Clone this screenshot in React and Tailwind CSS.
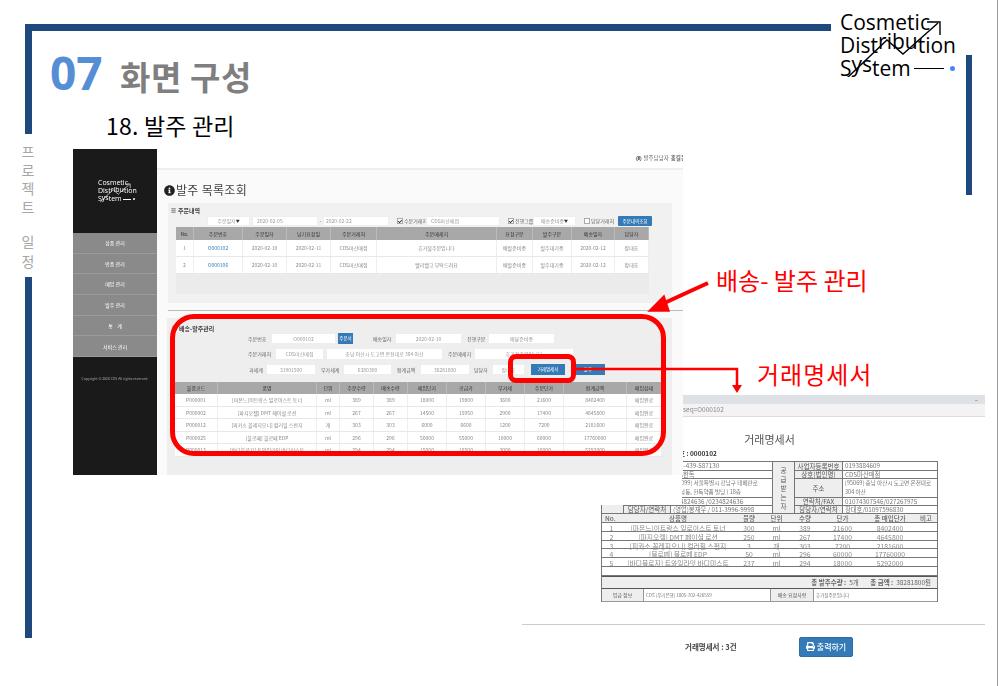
import React from "react";
import { FaInfoCircle, FaBars, FaPrint, FaRegUserCircle, FaCheck } from "react-icons/fa";

function Logo({ dark, box, text, raise, stroke, line, dot }) {
  return (
    <div className={`relative ${box} ${text} font-medium font-['Open_Sans','Noto_Sans',sans-serif] ${dark ? "text-white" : "text-black"}`}>
      <div>Cosmetic</div>
      <div>Dist<span className={`relative ${raise}`}>ribu</span>tion</div>
      <div className="flex items-center">
        S<span className={`relative ${raise}`}>ys</span>tem
        <span className={`ml-[3%] ${line} ${dark ? "bg-white" : "bg-black"}`} />
        <span className={`ml-[5%] rounded-full ${dot} ${dark ? "bg-white" : "bg-[#4a86f7]"}`} />
      </div>
      <svg className="absolute left-0 top-0 w-full h-full" viewBox="0 0 115 66" fill="none" stroke={dark ? "#fff" : "#000"} strokeWidth={stroke}>
        <path d="M7 67 L47 29 L63 43 L98 12" />
        <path d="M87 11 L100 11 L100 24" />
      </svg>
    </div>
  );
}

const Box = ({ c = "", children }) => (
  <div className={`h-full flex items-center justify-center bg-white rounded-[1px] text-[5px] text-[#999] border border-[#eeeeee] ${c}`}>{children}</div>
);
const Lbl = ({ c = "", children }) => (
  <div className={`text-[5px] text-[#666] whitespace-nowrap ${c}`}>{children}</div>
);
const Check = ({ on = true, c = "" }) => (
  <div className={`w-[6px] h-[6px] flex items-center justify-center bg-white border border-[#aaaaaa] text-[#222] text-[5px] ${c}`}>{on && <FaCheck />}</div>
);

const orderHead = ["No.", "주문번호", "주문일자", "납기요청일", "주문거래처", "주문메세지", "요청구분", "발주구분", "배송일자", "담당자"];
const orderRows = [
  ["1", "O000102", "2020-02-10", "2020-02-11", "CDS마산매점", "휴가철주문입니다", "배발준비중", "발주대기중", "2020-02-12", "장대호"],
  ["2", "O000106", "2020-02-10", "2020-02-11", "CDS마산매점", "빨리빨고 부탁드려요", "배발준비중", "발주대기중", "2020-02-12", "장대호"],
];
const shipHead = ["물품코드", "품명", "단위", "주문수량", "배송수량", "매입단가", "공급가", "부가세", "주문단가", "합계금액", "매입상태"];
const shipRows = [
  ["P000001", "[마몬느]이트랑스 일로이스트 토너", "ml", "389", "389", "18000", "19800", "3600", "21600", "8402400", "매입완료"],
  ["P000002", "[파지오젤] DMT 페이셜 로션", "ml", "267", "267", "14500", "15950", "2900", "17400", "4645800", "매입완료"],
  ["P000012", "[피카소 꼴레지오니] 컬러힐 스펀지", "개", "303", "303", "6000", "6600", "1200", "7200", "2181600", "매입완료"],
  ["P000025", "[블로떼] 블로떼 EDP", "ml", "296", "296", "50000", "55000", "10000", "60000", "17760000", "매입완료"],
  ["P000013", "[바디블로지] 트와일라잇 바디미스트", "ml", "294", "294", "15000", "16500", "3000", "18000", "5292000", "매입완료"],
];
const menu = ["상품 관리", "반품 관리", "매입 관리", "발주 관리", "통    계", "서비스 관리"];

function AdminShot() {
  return (
    <div className="absolute left-[73px] top-[149px] w-[610px] h-[326px] flex bg-[#fafafa] blur-[0.45px] overflow-hidden">
      <aside className="w-[84px] bg-[#1a1a1a] flex flex-col shrink-0">
        <div className="h-[84px] pt-[30px] pl-[25px]">
          <Logo dark box="w-[37px] h-[24px]" text="text-[7px] leading-[8px]" raise="-top-[1px]" stroke="2" line="w-[9px] h-px" dot="w-[2px] h-[2px]" />
        </div>
        <nav className="flex flex-col bg-[#8a8a8a]">
          {menu.map((m) => (
            <div key={m} className="h-[20.7px] flex items-center justify-center text-[5px] text-white whitespace-pre border-b border-[#9a9a9a]">{m}</div>
          ))}
        </nav>
        <div className="pt-[19px] text-center text-[3.5px] text-[#aaaaaa]">Copyright © 2020 CDS All rights reserved.</div>
      </aside>
      <main className="flex-1 min-w-0 flex flex-col">
        <header className="h-[21px] shrink-0 bg-white border-b-2 border-[#eeeeee] flex items-center justify-end gap-[2px] text-[5.5px] text-[#666] whitespace-nowrap -mr-[3px]">
          <FaRegUserCircle className="text-[#333]" /> 발주담당자 <b>홍길동</b>
        </header>
        <div className="h-[33px] shrink-0 flex items-end pl-[7px] pb-[5px] gap-px text-[12px] leading-[16px] tracking-[0.3px] text-[#444]">
          <FaInfoCircle className="text-[#222] text-[11px] mb-[2px]" /> 발주 목록조회
        </div>
        <section className="ml-[11px] w-[504px] h-[100px] shrink-0 bg-[#f1f1f1] flex flex-col">
          <div className="h-[13px] pl-[3px] pt-[2px] flex items-center gap-[2px] text-[6px] font-bold text-[#444]">
            <FaBars className="text-[5px]" /> 주문내역
          </div>
          <div className="h-[10px] flex items-center">
            <Box c="ml-[39px] w-[43px] justify-between px-[5px]"><span>주문일자</span><span className="text-[#333] text-[4px]">▼</span></Box>
            <Box c="ml-[2px] w-[66px] justify-start pl-[4px]">2020-02-05</Box>
            <Lbl c="w-[5px] text-center">-</Lbl>
            <Box c="w-[66px] justify-start pl-[2px]">2020-02-22</Box>
            <Check c="ml-[8px]" />
            <Lbl c="ml-px w-[22px]">수문거래처</Lbl>
            <Box c="w-[74px] justify-start pl-[4px]">CDS마산매점</Box>
            <Check c="ml-[8px]" />
            <Lbl c="ml-px w-[18px]">진행그룹</Lbl>
            <Box c="w-[43px] justify-between px-[5px]"><span>배송준비중</span><span className="text-[#333] text-[4px]">▼</span></Box>
            <Check on={false} c="ml-[8px]" />
            <Lbl c="ml-px w-[27px]">담당거래처</Lbl>
            <div className="h-full w-[34px] flex items-center justify-center bg-[#337ab7] text-white text-[4.5px] rounded-[1px]">주문내역조회</div>
          </div>
          <div className="ml-[8px] mt-[1px] w-[473px] h-[67px] bg-[#ebebeb]">
            <div className="grid grid-cols-[18px_49px_44px_44px_46px_120px_36px_39px_43px_34px] h-[13px] bg-[#a8a8a8]">
              {orderHead.map((h) => <div key={h} className="flex items-center justify-center text-[5px] text-[#333] border-r border-[#bbbbbb]">{h}</div>)}
            </div>
            {orderRows.map((r) => (
              <div key={r[0]} className="grid grid-cols-[18px_49px_44px_44px_46px_120px_36px_39px_43px_34px] h-[17px] bg-white border-b border-[#e8e8e8]">
                {r.map((v, i) => <div key={i} className={`flex items-center justify-center text-[5px] border-r border-[#eeeeee] ${i === 1 ? "text-[#337ab7]" : "text-[#888]"}`}>{v}</div>)}
              </div>
            ))}
          </div>
        </section>
        <div className="ml-[11px] mt-[7px] h-px w-[515px] bg-[#bbbbbb] shrink-0" />
        <section className="ml-[10px] mt-[7px] w-[505px] flex-1 bg-[#eeeeee] flex flex-col">
          <div className="h-[15px] pl-[5px] pt-[5px] flex items-center gap-[2px] text-[6px] font-bold text-[#444]">
            <FaBars className="text-[5px]" /> 배송-발주관리
          </div>
          <div className="h-[11px] flex items-center">
            <Lbl c="ml-[81px] w-[23px]">주문번호</Lbl>
            <Box c="w-[65px]">O000102</Box>
            <div className="ml-[2px] h-full w-[15px] bg-[#337ab7] text-white text-[4.5px] flex items-center justify-center">주문서</div>
            <Lbl c="ml-[20px] w-[22px]">배송일자</Lbl>
            <Box c="w-[67px]">2020-02-10</Box>
            <Lbl c="ml-[5px] w-[21px]">진행구분</Lbl>
            <Box c="w-[67px]">배달준비중</Box>
          </div>
          <div className="h-[12px] mt-[4px] flex items-center">
            <Lbl c="ml-[81px] w-[27px]">주문거래처</Lbl>
            <Box c="w-[49px]">CDS마산매점</Box>
            <Box c="ml-[2px] w-[117px]">충남 아산시 도고면 온천대로 304 아산</Box>
            <Lbl c="ml-[5px] w-[26px]">주문메세지</Lbl>
            <Box c="w-[100px]">휴가철주문입니다</Box>
          </div>
          <div className="h-[11px] mt-[4px] flex items-center">
            <Lbl c="ml-[82px] w-[17px]">과세계</Lbl>
            <Box c="w-[50px]">31901500</Box>
            <Lbl c="ml-[5px] w-[22px]">부가세계</Lbl>
            <Box c="w-[49px]">6380300</Box>
            <Lbl c="ml-[5px] w-[23px]">합계금액</Lbl>
            <Box c="w-[50px]">38281800</Box>
            <Lbl c="ml-[4px] w-[18px]">담당자</Lbl>
            <Box c="w-[33px]">장대호</Box>
            <div className="ml-[6px] h-full w-[34px] bg-[#337ab7] text-white text-[4.5px] flex items-center justify-center">거래명세서</div>
            <div className="ml-[6px] h-full w-[34px] bg-[#337ab7] text-white text-[4.5px] flex items-center justify-center">발주</div>
          </div>
          <div className="ml-[8px] mt-[7px] w-[487px]">
            <div className="grid grid-cols-[43px_99px_23px_34px_34px_39px_39px_39px_39px_63px_35px] h-[12px] bg-[#a8a8a8]">
              {shipHead.map((h) => <div key={h} className="flex items-center justify-center text-[5px] text-[#333] border-r border-[#bbbbbb]">{h}</div>)}
            </div>
            {shipRows.map((r) => (
              <div key={r[0]} className="grid grid-cols-[43px_99px_23px_34px_34px_39px_39px_39px_39px_63px_35px] h-[12.6px] bg-white border-b border-[#e8e8e8]">
                {r.map((v, i) => <div key={i} className="flex items-center justify-center text-[5px] text-[#888] border-r border-[#eeeeee] whitespace-nowrap overflow-hidden">{v}</div>)}
              </div>
            ))}
          </div>
        </section>
      </main>
    </div>
  );
}

const Th = ({ size = "text-[6.5px]", c = "", children }) => (
  <div className={`bg-[#eeeeee] flex items-center justify-center ${size} leading-[8px] text-[#555] whitespace-nowrap overflow-hidden ${c}`}>{children}</div>
);
const Td = ({ size = "text-[6.3px]", c = "whitespace-nowrap", children }) => (
  <div className={`bg-white flex items-center pl-[2px] ${size} leading-[9px] text-[#777] overflow-hidden ${c}`}>{children}</div>
);
const Vert = ({ text }) => (
  <Th c="row-span-5 flex-col gap-[1px]">{text.split("").map((ch, i) => <span key={i}>{ch}</span>)}</Th>
);

const itemRows = [
  ["1", "[마몬느]이트랑스 일로이스트 토너", "300", "ml", "389", "21600", "8402400", ""],
  ["2", "[파지오젤] DMT 페이셜 로션", "250", "ml", "267", "17400", "4645800", ""],
  ["3", "[피카소 꼴레지오니] 컬러힐 스펀지", "3", "개", "303", "7200", "2181600", ""],
  ["4", "[블로떼] 블로떼 EDP", "50", "ml", "296", "60000", "17760000", ""],
  ["5", "[바디블로지] 트와일라잇 바디미스트", "237", "ml", "294", "18000", "5292000", ""],
  ["", "", "", "", "", "", "", ""],
];
const itemHead = ["No.", "상품명", "물량", "단위", "수량", "단가", "총 매입단가", "비고"];

function InvoiceShot() {
  return (
    <div className="absolute left-[522px] top-[395px] w-[463px] h-[291px] flex flex-col bg-white blur-[0.35px]">
      <div className="h-[9px] shrink-0 bg-[#dee1e6] flex items-center justify-end pr-[7px] text-[6px] text-[#555]">–</div>
      <div className="h-[13px] shrink-0 bg-[#f3f3f3] border-b border-[#dddddd] flex items-center pl-[118px] text-[6.5px] text-[#888]">
        popup.do?ordseq=O000102
      </div>
      <div className="ml-[79px] w-[337px] flex flex-col">
        <div className="h-[30px] flex items-end justify-center text-[11px] leading-[16px] text-[#555]">거래명세서</div>
        <div className="h-[14px] pl-[60px] flex items-center text-[6.5px] font-bold text-[#333]">주문번호 : 0000102</div>
        <div className="grid grid-cols-[21px_46px_101px_21px_47px_1fr] grid-rows-[7.5px_7px_18px_7px_7.5px] gap-px bg-[#777777] border border-[#777777] h-[53px]">
          <Vert text="공급자" />
          <Th>사업자등록번호</Th><Td>114-439-587130</Td>
          <Vert text="공급받는자" />
          <Th>사업자등록번호</Th><Td>0193884609</Td>
          <Th>상호(법인명)</Th><Td>(주)한독</Td>
          <Th>상호(법인명)</Th><Td>CDS마산매점</Td>
          <Th>주소</Th><Td size="text-[5.6px]" c="whitespace-pre">{"[06099] 서울특별시 강남구 테헤란로\n(역삼동, 한독약품 빌딩 ) 18층"}</Td>
          <Th>주소</Th><Td size="text-[5.6px]" c="whitespace-pre">{"[95069] 충남 아산시 도고면 온천대로\n304 아산"}</Td>
          <Th>연락처/FAX</Th><Td>024824636 /0234824636</Td>
          <Th>연락처/FAX</Th><Td>01074307546/027267975</Td>
          <Th>담당자/연락처</Th><Td>(영업)봉재우 / 011-3996-9998</Td>
          <Th>담당자/연락처</Th><Td>장대호/01097596830</Td>
        </div>
        <div className="border-x border-[#777777]">
          <div className="grid grid-cols-[19px_114px_28px_27px_30px_45px_50px_22px] h-[9px] bg-[#eeeeee] border-b border-[#777777]">
            {itemHead.map((h, i) => <div key={h} className={`flex items-center text-[6.5px] font-medium text-[#666] whitespace-nowrap ${i === 0 ? "pl-[3px]" : "justify-center"}`}>{h}</div>)}
          </div>
          {itemRows.map((r, idx) => (
            <div key={idx} className="grid grid-cols-[19px_114px_28px_27px_30px_45px_50px_22px] h-[8.8px] border-b border-[#777777]">
              {r.map((v, i) => <div key={i} className="flex items-center justify-center text-[6.8px] text-[#888] whitespace-nowrap">{v}</div>)}
            </div>
          ))}
          <div className="h-[13.5px] bg-[#eeeeee] border-y border-[#555555] flex items-center justify-end pr-[6px] text-[6.5px] text-[#666] whitespace-pre">
            <b>총 발주수량 : </b> 5개 <b className="ml-[10px]">총 금액 : </b> 38281800원
          </div>
          <div className="grid grid-cols-[41px_126px_42px_1fr] h-[12.5px] gap-px bg-[#999999] border-b border-[#999999]">
            <Th size="text-[5px]">입금 정보</Th>
            <Td size="text-[4.5px]">CDS (우리은행) 1005-702-426559</Td>
            <Th size="text-[5px]">배송 요청사항</Th>
            <Td size="text-[4.5px]">휴가철주문입니다</Td>
          </div>
        </div>
      </div>
      <div className="mt-[22px] h-px w-full bg-[#cccccc]" />
      <div className="mt-[12px] h-[20px] flex items-center">
        <div className="ml-[163px] w-[114px] text-[7.5px] font-bold text-[#444]">거래명세서 : 3건</div>
        <div className="w-[54px] h-[20px] flex items-center justify-center gap-[2px] bg-[#337ab7] border border-[#2e6da4] rounded-[2px] text-white text-[8px] font-medium">
          <FaPrint className="text-[9px]" /> 출력하기
        </div>
      </div>
      <div className="absolute left-0 top-[80px] w-[160px] h-[30px] bg-white" />
    </div>
  );
}

export default function App() {
  return (
    <div className="relative w-[998px] h-[686px] overflow-hidden bg-white font-['Noto_Sans_CJK_KR','Noto_Sans',sans-serif]">
      <div className="absolute left-[25px] top-[24px] w-[806px] h-[7px] bg-[#1f497d]" />
      <div className="absolute left-[25px] top-[24px] w-[7px] h-[110px] bg-[#1f497d]" />
      <div className="absolute left-[25px] top-[277px] w-[7px] h-[361px] bg-[#1f497d]" />
      <div className="absolute left-[966px] top-[55px] w-[6px] h-[140px] bg-[#1f497d]" />
      <div className="absolute left-[997px] top-0 w-px h-full bg-[#999999]" />

      <div className="absolute left-[50px] top-[40px] text-[46px] leading-[65px] font-bold text-[#558ed5] font-['Open_Sans',sans-serif]">07</div>
      <div className="absolute left-[120px] top-[52px] text-[33px] leading-[48px] font-bold text-[#7f7f7f] tracking-[0.6px]">화면 구성</div>
      <div className="absolute left-[106px] top-[108px] text-[23px] leading-[34px] tracking-[0.2px] text-black">18. 발주 관리</div>
      <div className="absolute left-[20px] top-[142px] w-[16px] flex flex-col items-center text-[14px] leading-[18.5px] text-[#a6a6a6]">
        <span>프</span><span>로</span><span>젝</span><span>트</span><span className="h-[16px]" /><span>일</span><span className="mt-[1px]">정</span>
      </div>

      <div className="absolute left-[840px] top-[11px]">
        <Logo box="w-[115px] h-[66px]" text="text-[21px] leading-[23px]" raise="-top-[4px]" stroke="1.4" line="w-[30px] h-px" dot="w-[5px] h-[5px]" />
      </div>

      <InvoiceShot />
      <AdminShot />

      <div className="absolute left-[170px] top-[314px] w-[496px] h-[142px] rounded-[24px] border-[5px] border-[#ff0000]" />
      <div className="absolute left-[508px] top-[354px] w-[68px] h-[29px] rounded-[8px] border-[5px] border-[#ff0000]" />
      <svg className="absolute left-0 top-0 w-[998px] h-[686px] pointer-events-none" viewBox="0 0 998 686" fill="none">
        <path d="M708 283 L660 305" stroke="#ff0000" strokeWidth="4" />
        <path d="M649 311 L664 296 L669 311 Z" fill="#ff0000" stroke="#ff0000" strokeWidth="1.5" />
        <path d="M576 369 H737 V386" stroke="#ff0000" strokeWidth="2.5" />
        <path d="M732 385 H742 L737 393 Z" fill="#ff0000" />
      </svg>
      <div className="absolute left-[716px] top-[262px] text-[24px] leading-[36px] text-[#ff0000] whitespace-nowrap">배송- 발주 관리</div>
      <div className="absolute left-[757px] top-[356px] text-[24px] leading-[36px] tracking-[1px] text-[#ff0000] whitespace-nowrap">거래명세서</div>
    </div>
  );
}
